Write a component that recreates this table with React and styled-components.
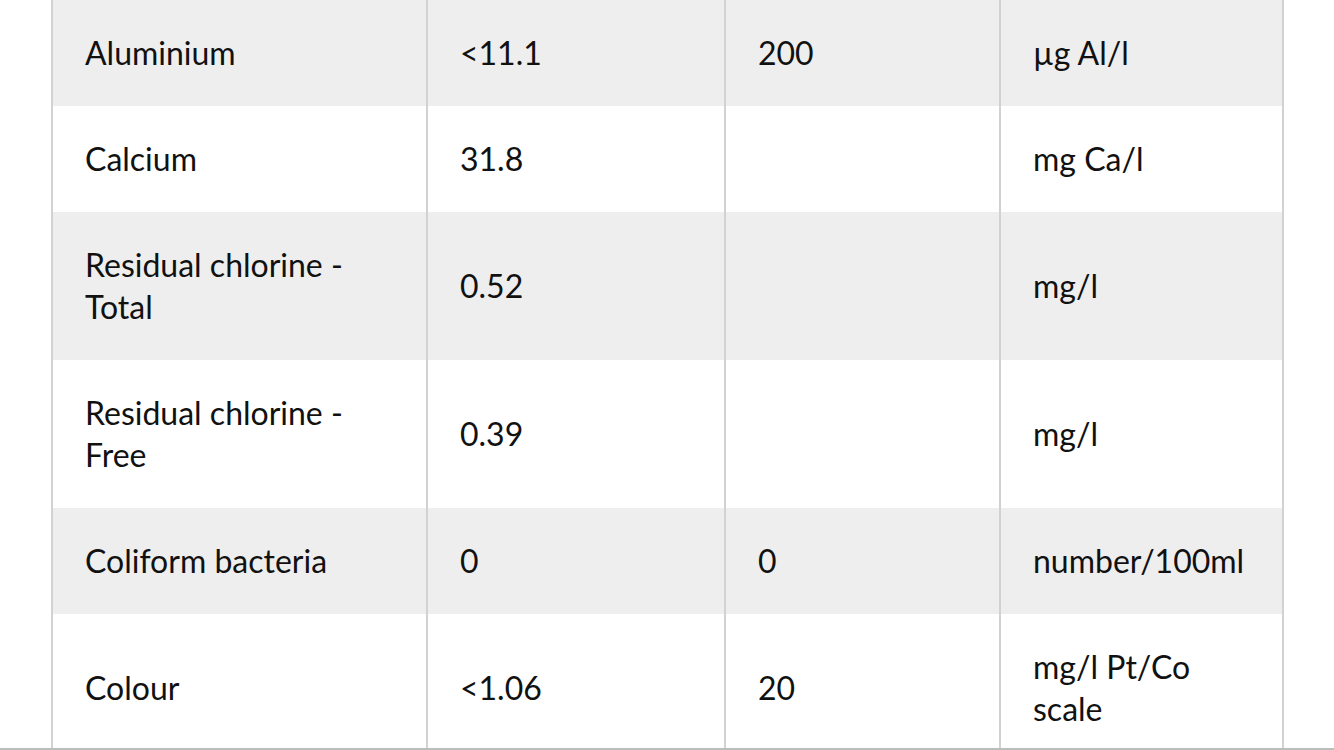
import React from "react";
import styled, { createGlobalStyle } from "styled-components";

const GlobalStyle = createGlobalStyle`
    html, body {
        margin: 0;
        padding: 0;
        background: #ffffff;
    }
    body {
        font-family: Lato, "Liberation Sans", sans-serif;
        color: #111111;
    }
`;

const Screen = styled.div`
    height: 748px;
    overflow: hidden;
    border-bottom: 2px solid #bdbdbd;
`;

const Table = styled.div`
    margin: 0 50px 0 51px;
    border-left: 2px solid #d2d2d2;
    border-right: 2px solid #d2d2d2;
`;

const Row = styled.div`
    display: grid;
    grid-template-columns: 373px 298px 275px 1fr;
    background: ${(props) => (props.$shaded ? "#eeeeee" : "#ffffff")};
`;

const Cell = styled.div`
    display: flex;
    align-items: center;
    padding: 32px;
    font-size: 32px;
    line-height: 42px;
    & + & {
        border-left: 2px solid #d2d2d2;
    }
`;

const rows = [
    ["Aluminium", "<11.1", "200", "µg Al/l"],
    ["Calcium", "31.8", "", "mg Ca/l"],
    ["Residual chlorine - Total", "0.52", "", "mg/l"],
    ["Residual chlorine - Free", "0.39", "", "mg/l"],
    ["Coliform bacteria", "0", "0", "number/100ml"],
    ["Colour", "<1.06", "20", "mg/l Pt/Co scale"],
];

const App = () => {
    return (
        <>
            <GlobalStyle />
            <Screen>
                <Table>
                    {rows.map((row, i) => (
                        <Row key={row[0]} $shaded={i % 2 === 0}>
                            {row.map((value, j) => (
                                <Cell key={j}>{value}</Cell>
                            ))}
                        </Row>
                    ))}
                </Table>
            </Screen>
        </>
    );
};

export default App;
